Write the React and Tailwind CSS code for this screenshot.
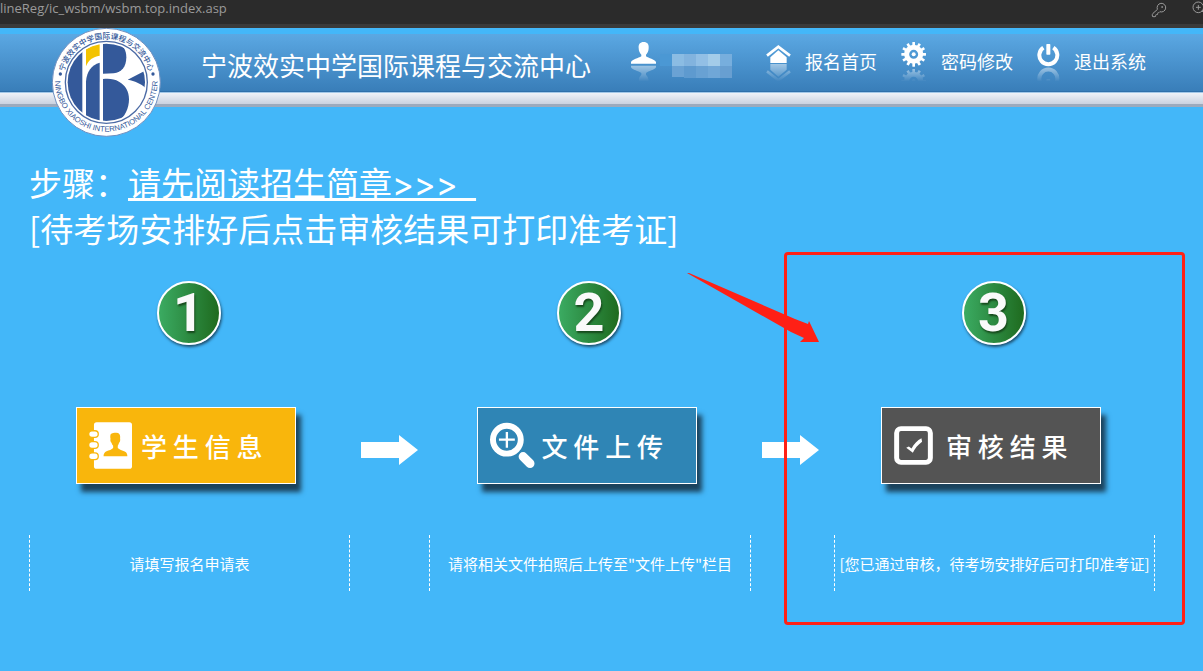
import { Fragment } from "react";
import { KeyRound, ZoomIn } from "lucide-react";

const GRID = "grid grid-cols-[321fr_79fr_322fr_83fr_321fr]";

const STEPS = [
  {
    number: "1",
    label: "学 生 信 息",
    note: "请填写报名申请表",
    color: "bg-[#f9b60c]",
    icon: <BookIcon />,
  },
  {
    number: "2",
    label: "文 件 上 传",
    note: '请将相关文件拍照后上传至"文件上传"栏目',
    color: "bg-[#2f85b5]",
    icon: <UploadIcon />,
  },
  {
    number: "3",
    label: "审 核 结 果",
    note: "[您已通过审核，待考场安排好后可打印准考证]",
    color: "bg-[#545454]",
    icon: <CheckIcon />,
  },
];

function BookIcon() {
  return (
    <svg viewBox="0 0 130 141" className="h-[47px] w-[43px]" aria-hidden="true">
      <rect x="15" y="0" width="115" height="141" rx="8" fill="#fff" />
      {[36, 69, 103].map((y) => (
        <rect key={y} x="-1" y={y - 10} width="29" height="20" rx="10" fill="#fff" stroke="#f9b60c" strokeWidth="4" />
      ))}
      <path
        d="M66 36c3-3 10-4 16-4l6 1c6 3 7 9 6 16 1 6 0 10-3 13-1 4-3 7-4 9v7c4 5 14 7 21 11 6 3 8 8 8 14H44c0-7 3-12 9-15 7-3 16-5 20-10v-7c-2-2-4-5-5-9-3-3-4-7-3-12-1-5-1-10 1-14z"
        fill="#f9b60c"
      />
    </svg>
  );
}

function UploadIcon() {
  return (
    <svg viewBox="0 0 136 141" className="h-[47px] w-[45px]" aria-hidden="true" fill="none" stroke="#fff">
      <circle cx="51" cy="53" r="42" strokeWidth="18" />
      <path d="M51 30v47M27 53h48" strokeWidth="7" />
      <path d="M100 104l21 21" strokeWidth="27" strokeLinecap="round" />
    </svg>
  );
}

function CheckIcon() {
  return (
    <svg viewBox="0 0 118 118" className="size-[39px]" aria-hidden="true">
      <rect x="8" y="8" width="102" height="102" rx="13" fill="none" stroke="#fff" strokeWidth="15" />
      <path d="M37 66l8-4 8 6c7-13 18-25 30-31l2 11c-13 9-22 21-28 33z" fill="#fff" />
    </svg>
  );
}

// White glyph with its faded mirror image below.
function Reflected({ id, className, width, axis, children }) {
  return (
    <svg viewBox={`0 0 ${width} 120`} className={className} fill="#fff" aria-hidden="true">
      <defs>
        <linearGradient id={`${id}-fade`} gradientUnits="userSpaceOnUse" x1="0" x2="0" y1={axis / 2} y2="119">
          <stop offset="0" stopColor="#fff" stopOpacity="0.5" />
          <stop offset="1" stopColor="#fff" stopOpacity="0" />
        </linearGradient>
        <mask id={`${id}-mask`} maskUnits="userSpaceOnUse" x="0" y="0" width={width} height="120">
          <rect y={axis / 2} width={width} height="120" fill={`url(#${id}-fade)`} />
        </mask>
      </defs>
      {children}
      <g mask={`url(#${id}-mask)`}>
        <g transform={`translate(0 ${axis}) scale(1 -1)`}>{children}</g>
      </g>
    </svg>
  );
}

function UserIcon() {
  return (
    <Reflected id="user" width={75} axis={136} className="h-10 w-[25px] shrink-0">
      <path d="M38 0c11 0 16 7 15 18 0 10-4 16-8 20v5c8 6 26 9 30 17v5H0v-5c4-8 22-11 31-17v-5c-4-4-8-10-8-20C22 7 27 0 38 0z" />
    </Reflected>
  );
}

function HomeIcon() {
  return (
    <Reflected id="home" width={75} axis={129} className="h-10 w-[25px] shrink-0">
      <path d="M3 41L37 14l35 27" fill="none" stroke="#fff" strokeWidth="8" />
      <path d="M37 25l25 21v17H13V46z" />
    </Reflected>
  );
}

function GearIcon() {
  return (
    <Reflected id="gear" width={78} axis={155} className="h-10 w-[26px] shrink-0">
      <circle cx="38" cy="37" r="21" fill="none" stroke="#fff" strokeWidth="15" />
      <circle cx="38" cy="37" r="6" />
      {[0, 30, 60, 90, 120, 150, 180, 210, 240, 270, 300, 330].map((deg) => (
        <rect key={deg} x="34" y="0" width="8" height="14" rx="1" transform={`rotate(${deg} 38 37)`} />
      ))}
    </Reflected>
  );
}

function PowerIcon() {
  return (
    <Reflected id="power" width={69} axis={149} className="h-10 w-[23px] shrink-0">
      <path d="M19 17a27 27 0 1 0 30 0" fill="none" stroke="#fff" strokeWidth="12" />
      <rect x="28" y="6" width="12" height="32" rx="2" />
    </Reflected>
  );
}

function BlurredName() {
  const top = ["#8bbce3", "#82b3de", "#92bfe5", "#a3cce9", "#77aedd"];
  const bottom = ["#6aa2d4", "#5e9acf", "#68a1d3", "#70a7d7", "#689fd1"];
  return (
    <svg viewBox="0 0 76 32" className="h-8 w-[76px] shrink-0" aria-hidden="true">
      <rect x="2" y="4" width="12" height="12" fill="#4b98d4" />
      {top.map((fill, i) => (
        <rect key={i} x={14 + i * 12} y="4" width="12" height="12" fill={fill} />
      ))}
      {bottom.map((fill, i) => (
        <rect key={i} x={14 + i * 12} y="16" width="12" height={i === 0 ? 11 : 12} fill={fill} />
      ))}
    </svg>
  );
}

function Logo() {
  return (
    <svg viewBox="35 25 327 327" className="size-[109px] shrink-0" role="img" aria-label="校徽">
      <defs>
        <path id="ring-top" d="M67 188a131 131 0 0 1 262 0" />
        <path id="ring-bottom" d="M53 130a154 154 0 1 0 290 0" />
        <clipPath id="disc">
          <circle cx="198" cy="188" r="116" />
        </clipPath>
      </defs>
      <circle cx="198" cy="188" r="162" fill="#fff" stroke="#6d8fc0" strokeWidth="3" />
      <circle cx="198" cy="188" r="123" fill="#fff" stroke="#4c6ba5" strokeWidth="4" />
      <g clipPath="url(#disc)" fill="#34599a">
        <path d="M80 60h46v260H80z" />
        <path d="M137 186c2-31 17-50 41-57v180h-41z" />
        <path d="M137 88l41-20v40c-20 3-34 13-41 32z" fill="#f3c300" />
        <path d="M188 68h22c34 0 48 18 48 45 0 28-14 46-38 48l-32 1z" />
        <path d="M188 178c20-2 34 0 48 8 20 11 30 29 30 53 0 31-17 68-50 68h-28z" />
        <path d="M262 180l60-31v62c-16-17-33-26-60-31z" />
      </g>
      <g fill="#34599a" fontWeight="500">
        <text fontFamily="Noto Sans CJK SC, sans-serif" fontSize="23" textAnchor="middle">
          <textPath href="#ring-top" startOffset="50%">宁波效实中学国际课程与交流中心</textPath>
        </text>
        <text fontFamily="Liberation Sans, sans-serif" fontSize="23" textAnchor="middle">
          <textPath href="#ring-bottom" startOffset="50%">NINGBO XIAOSHI INTERNATIONAL CENTER</textPath>
        </text>
        <circle cx="60" cy="163" r="5" />
        <circle cx="338" cy="163" r="5" />
      </g>
    </svg>
  );
}

function NextArrow() {
  return (
    <svg viewBox="0 0 57 30" className="mt-2 ml-[11px] h-[30px] w-[57px]" fill="#fff" aria-hidden="true">
      <path d="M0 7h38V0l19 15-19 15v-7H0z" />
    </svg>
  );
}

function AddressBar() {
  return (
    <div className="flex h-7 items-start overflow-hidden border-b-4 border-[#3a3a3a] bg-[#2b2b2b] text-[#9a9a9a]">
      <input
        type="text"
        aria-label="地址"
        readOnly
        defaultValue="lineReg/ic_wsbm/wsbm.top.index.asp"
        className="h-[18px] min-w-0 flex-1 bg-transparent font-['Open_Sans',sans-serif] text-[13px] outline-none"
      />
      <KeyRound className="mt-0.5 mr-6 size-4 shrink-0" strokeWidth={1.5} />
      <ZoomIn className="-mr-1 size-4 shrink-0" strokeWidth={1.5} />
    </div>
  );
}

function NavLink({ icon, children }) {
  return (
    <a href="#" className="flex gap-3.5 whitespace-nowrap text-lg leading-[38px]">
      {icon}
      {children}
    </a>
  );
}

function Header() {
  return (
    <header className="h-[79px] pt-1.5">
      <div className="h-[59px] border-b-2 border-[#2f70aa] bg-linear-to-b from-[#5ba8e3] to-[#397eb9]">
        <div className="flex items-start">
          <div className="-mt-1.5 ml-[52px]">
            <Logo />
          </div>
          <h1 className="ml-10 whitespace-nowrap text-[26px] leading-[62px]">宁波效实中学国际课程与交流中心</h1>
          <div className="ml-10 flex gap-0.5 pt-2">
            <UserIcon />
            <div className="pt-2">
              <BlurredName />
            </div>
          </div>
          <nav className="ml-8 flex gap-6 pt-2">
            <NavLink icon={<HomeIcon />}>报名首页</NavLink>
            <NavLink icon={<GearIcon />}>密码修改</NavLink>
            <NavLink icon={<PowerIcon />}>退出系统</NavLink>
          </nav>
        </div>
      </div>
      <div className="-mt-px h-[15px] border-t border-b-3 border-t-[#a3c8e8] border-b-[#9caabd] bg-linear-to-b from-[#eff2f8] to-[#cad2e0]" />
    </header>
  );
}

function Steps() {
  return (
    <section className="relative mt-0.5 pt-[29px]">
      <div className={GRID}>
        {STEPS.map((step, i) => (
          <Fragment key={step.number}>
            {i > 0 && <div />}
            <div className="flex justify-center pr-0.5">
              <span className="flex size-16 items-center justify-center rounded-full border-2 border-white bg-linear-to-r from-[#3bab62] to-[#1f6b1e] font-[Roboto,sans-serif] text-[54px] leading-none font-bold text-[#fafafa] shadow-[1px_2px_3px_#1c4a68] text-shadow-[1px_2px_2px_#17491c]">
                {step.number}
              </span>
            </div>
          </Fragment>
        ))}
      </div>

      <div className={`${GRID} mt-[62px] items-center`}>
        {STEPS.map((step, i) => (
          <Fragment key={step.number}>
            {i > 0 && <NextArrow />}
            <div className="flex justify-center pr-[7px]">
              <button
                type="button"
                className={`flex h-[77px] w-[220px] items-center gap-2 border border-white pl-3 text-[26px] font-medium shadow-[5px_8px_5px_#1b425c] ${step.color}`}
              >
                <span className="w-11">{step.icon}</span>
                {step.label}
              </button>
            </div>
          </Fragment>
        ))}
      </div>

      <div className={`${GRID} mt-[51px]`}>
        {STEPS.map((step, i) => (
          <Fragment key={step.number}>
            {i > 0 && <div />}
            <p className="flex h-14 items-center justify-center border-x border-dashed border-white text-[15px] leading-none whitespace-nowrap">
              {step.note}
            </p>
          </Fragment>
        ))}
      </div>

      {/* red marker around the last step */}
      <div className="pointer-events-none absolute top-0 -right-[30px] h-[373px] w-[401px] rounded-sm border-3 border-[#ff2015]">
        <svg viewBox="0 0 132 70" className="absolute top-[18px] -left-[100px] h-[70px] w-[132px]" aria-hidden="true">
          <path d="M0 0l2 0 106 46 13 5 1-3 10 21H113l4-4-13-6z" fill="#ff2015" />
        </svg>
      </div>
    </section>
  );
}

export default function App() {
  return (
    <div className="min-h-screen overflow-hidden bg-[#43b7f9] font-['Noto_Sans_CJK_SC',sans-serif] text-white">
      <AddressBar />
      <Header />
      <main className="mr-12 ml-[29px] pt-[53px]">
        <h2 className="text-[33px] leading-[44px]">
          步骤：
          <a href="#" className="font-[Inter,'Noto_Sans_CJK_SC',sans-serif] underline decoration-3 underline-offset-2">
            请先阅读招生简章&gt;&gt;&gt;&nbsp;&nbsp;
          </a>
          <br />
          [待考场安排好后点击审核结果可打印准考证]
        </h2>
        <Steps />
      </main>
    </div>
  );
}
